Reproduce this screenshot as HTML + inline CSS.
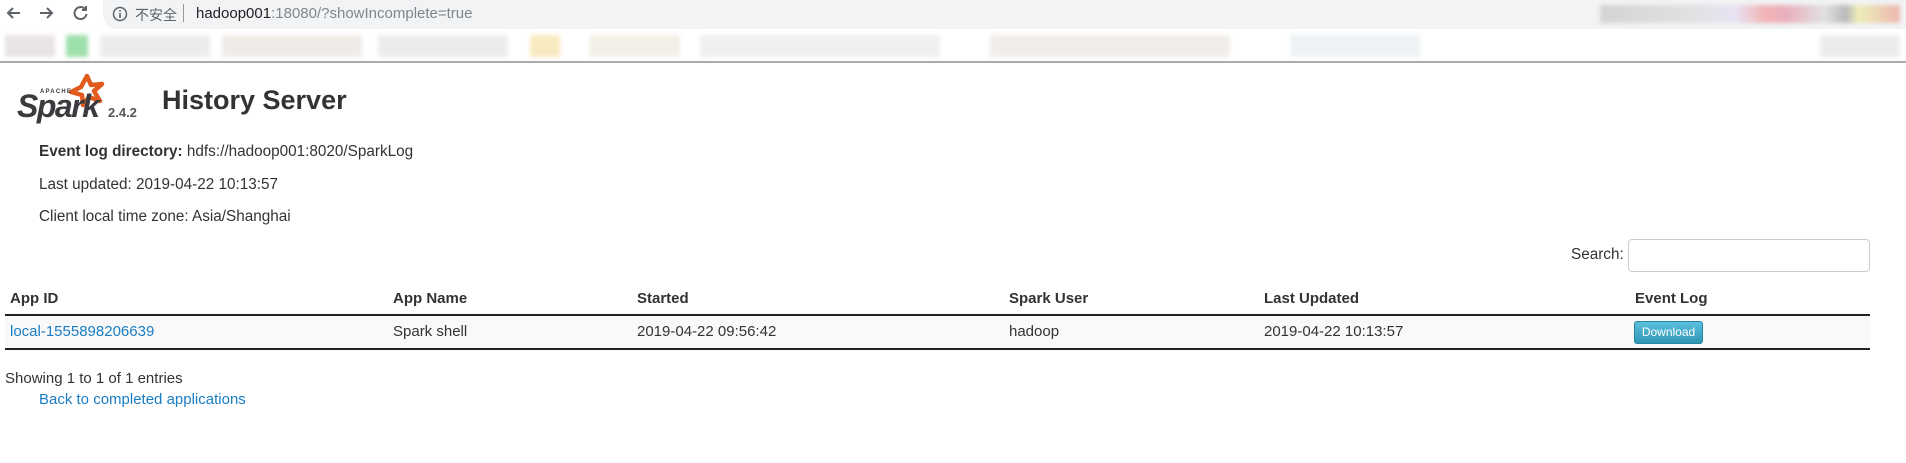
<!DOCTYPE html>
<html><head><meta charset="utf-8"><style>
*{margin:0;padding:0;box-sizing:border-box}
body{width:1906px;height:463px;background:#fff;font-family:"Liberation Sans","Noto Sans CJK SC",sans-serif;color:#333;position:relative;overflow:hidden;font-size:15.3px}
.abs{position:absolute}
.addr{left:103px;top:0;width:1803px;height:29px;background:#f1f3f4;border-radius:0 0 0 14px}
.bm{height:22px;top:35px;background:#ececec;filter:blur(2px)}
.btn{left:1634px;top:321px;width:69px;height:23px;border-radius:3px;background:linear-gradient(#5bc0de,#2f96b4);border:1px solid #2a85a0;color:#fff;font-size:12px;text-align:center;line-height:21px}
.a{color:#1a7dc4}
</style></head><body>
<div class="abs addr"></div>
<svg class="abs" style="left:0;top:0" width="100" height="28" viewBox="0 0 100 28">
<g stroke="#5f6368" stroke-width="2" fill="none">
<path d="M20 13H8M13 8l-5 5 5 5"/>
<path d="M40 13h12M47 8l5 5-5 5"/>
<path d="M85 9a6 6 0 1 0 1.5 5"/><path d="M86 6v4h-4" />
</g></svg>
<svg class="abs" style="left:112px;top:6px" width="16" height="16"><circle cx="8" cy="8" r="6.5" stroke="#5f6368" stroke-width="1.5" fill="none"/><rect x="7.2" y="7" width="1.6" height="5" fill="#5f6368"/><rect x="7.2" y="4" width="1.6" height="1.6" fill="#5f6368"/></svg>
<div class="abs" style="left:135px;top:5px;font-size:14px;color:#5f6368">不安全</div>
<div class="abs" style="left:183px;top:4px;width:1px;height:18px;background:#999"></div>
<div class="abs" style="left:196px;top:5px;font-size:15px;color:#202124">hadoop001<span style="color:#80868b">:18080/?showIncomplete=true</span></div>
<div class="abs bm" style="left:5px;width:50px;background:#e9e4e4"></div>
<div class="abs bm" style="left:66px;width:22px;background:#9ee0ac"></div>
<div class="abs bm" style="left:100px;width:110px"></div>
<div class="abs bm" style="left:222px;width:140px;background:#efece8"></div>
<div class="abs bm" style="left:378px;width:130px"></div>
<div class="abs bm" style="left:530px;width:30px;background:#f8eac0"></div>
<div class="abs bm" style="left:590px;width:90px;background:#f3efe6"></div>
<div class="abs bm" style="left:700px;width:240px;background:#efefef"></div>
<div class="abs bm" style="left:990px;width:240px;background:#f1eeea"></div>
<div class="abs bm" style="left:1290px;width:130px;background:#eef2f5"></div>
<div class="abs" style="left:1600px;top:5px;width:300px;height:18px;background:linear-gradient(90deg,#ccc,#ddd 30%,#e6e0f5 45%,#f2a3a3 55%,#e8a0b0 62%,#ddd 75%,#aaa 82%,#eea 86%,#eaa8a0);filter:blur(2px);opacity:.8"></div>
<div class="abs bm" style="left:1820px;width:80px"></div>
<div class="abs" style="left:0;top:61px;width:1906px;height:2px;background:#aaa"></div>
<svg class="abs" style="left:14px;top:72px" width="95" height="52" viewBox="0 0 95 52">
<path d="M73 4l4 9 11-1-8 7 6 10-11-4-6 8-1-10-11-3 10-5z" fill="none" stroke="#e25a1c" stroke-width="4.5" stroke-linejoin="round"/>
<text x="26" y="21" font-family="Liberation Sans" font-size="6" font-weight="bold" fill="#3c3a3e" letter-spacing="1.2">APACHE</text>
<text x="3" y="45" font-family="Liberation Sans" font-size="32" font-weight="bold" font-style="italic" fill="#3c3a3e" letter-spacing="-1.5">Spark</text>
</svg>
<div class="abs" style="left:108px;top:105px;font-size:13px;font-weight:bold;color:#555">2.4.2</div>
<div class="abs" style="left:162px;top:85px;font-size:27px;font-weight:bold;color:#333">History Server</div>
<div class="abs" style="left:39px;top:143px"><b>Event log directory:</b> hdfs://hadoop001:8020/SparkLog</div>
<div class="abs" style="left:39px;top:176px">Last updated: 2019-04-22 10:13:57</div>
<div class="abs" style="left:39px;top:208px">Client local time zone: Asia/Shanghai</div>
<div class="abs" style="left:1571px;top:246px">Search:</div>
<div class="abs" style="left:1628px;top:239px;width:242px;height:33px;border:1px solid #ccc;border-radius:4px"></div>
<div class="abs" style="left:5px;top:314px;width:1865px;height:2px;background:#222"></div>
<div class="abs" style="left:5px;top:316px;width:1865px;height:32px;background:#f9f9f9"></div>
<div class="abs" style="left:5px;top:348px;width:1865px;height:1.5px;background:#222"></div>
<div class="abs" style="top:290px;left:0;font-weight:bold;font-size:15px">
<span class="abs" style="left:10px;white-space:nowrap">App ID</span>
<span class="abs" style="left:393px;white-space:nowrap">App Name</span>
<span class="abs" style="left:637px;white-space:nowrap">Started</span>
<span class="abs" style="left:1009px;white-space:nowrap">Spark User</span>
<span class="abs" style="left:1264px;white-space:nowrap">Last Updated</span>
<span class="abs" style="left:1635px;white-space:nowrap">Event Log</span>
</div>
<div class="abs" style="top:323px;left:0;font-size:15px">
<span class="abs a" style="left:10px;white-space:nowrap">local-1555898206639</span>
<span class="abs" style="left:393px;white-space:nowrap">Spark shell</span>
<span class="abs" style="left:637px;white-space:nowrap">2019-04-22 09:56:42</span>
<span class="abs" style="left:1009px;white-space:nowrap">hadoop</span>
<span class="abs" style="left:1264px;white-space:nowrap">2019-04-22 10:13:57</span>
</div>
<div class="abs btn">Download</div>
<div class="abs" style="left:5px;top:370px;font-size:15px">Showing 1 to 1 of 1 entries</div>
<div class="abs a" style="left:39px;top:391px;font-size:15px">Back to completed applications</div>
</body></html>
